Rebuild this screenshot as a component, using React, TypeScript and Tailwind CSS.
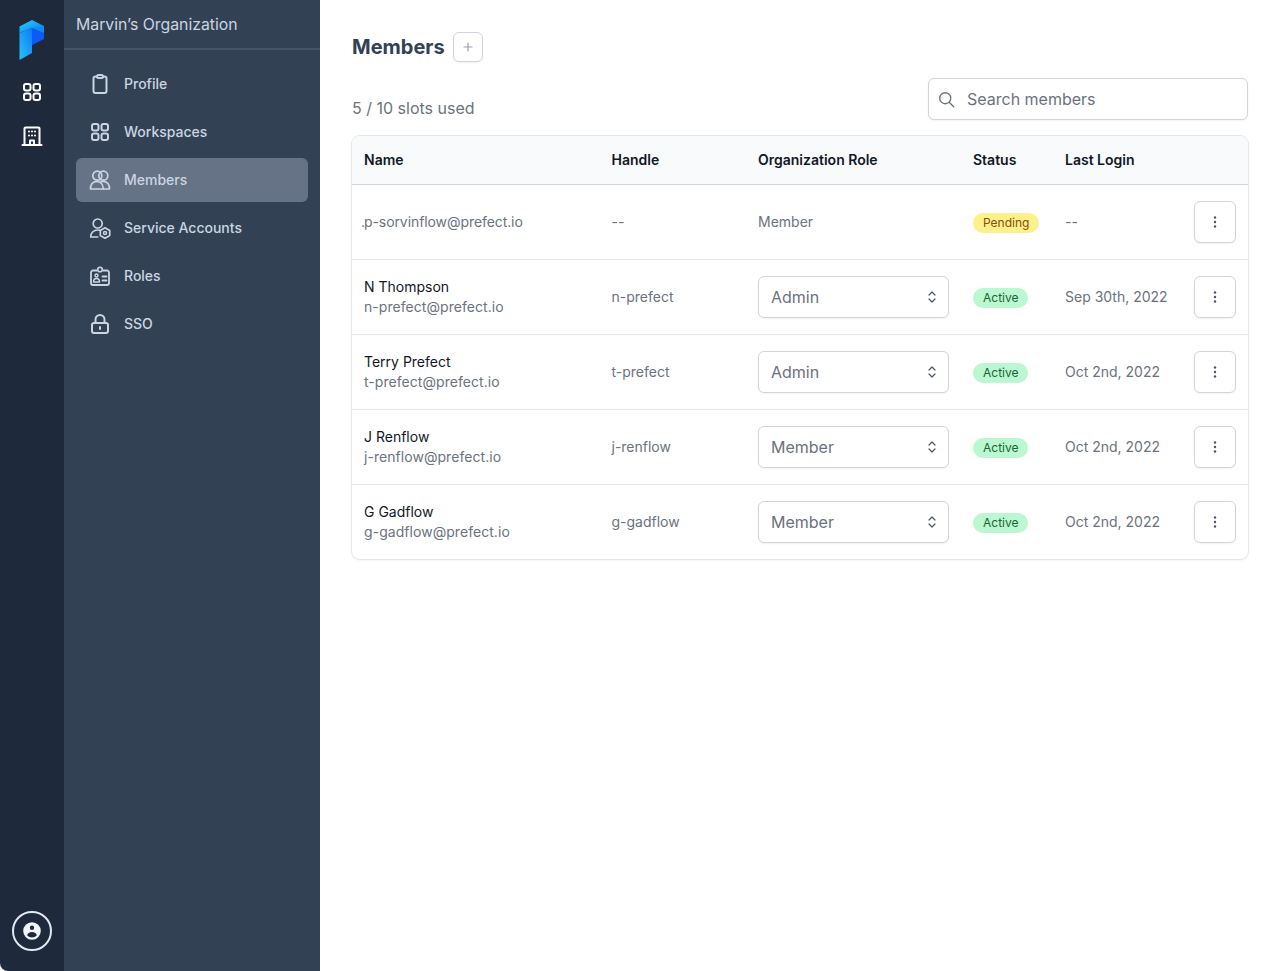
import React from "react";

const Sv = ({ children, className = "w-6 h-6" }: { children: React.ReactNode; className?: string }) => (
  <svg viewBox="0 0 24 24" fill="none" stroke="currentColor" strokeWidth="2" strokeLinecap="round" strokeLinejoin="round" className={className}>
    {children}
  </svg>
);

const Grid4 = ({ className }: { className?: string }) => (
  <Sv className={className}>
    <rect x="4" y="4" width="6.500" height="6.500" rx="2" />
    <rect x="13.500" y="4" width="6.500" height="6.500" rx="2" />
    <rect x="4" y="13.500" width="6.500" height="6.500" rx="2" />
    <rect x="13.500" y="13.500" width="6.500" height="6.500" rx="2" />
  </Sv>
);

const ProfileIcon = () => (
  <Sv>
    <path d="M9 4.500H7.500a2 2 0 0 0-2 2V19a2 2 0 0 0 2 2h9a2 2 0 0 0 2-2V6.500a2 2 0 0 0-2-2H15" />
    <path d="M9 4.500C9 3.700 9.700 3 10.500 3h3c.8 0 1.500.7 1.500 1.500S14.300 6 13.500 6h-3C9.700 6 9 5.300 9 4.500z" />
  </Sv>
);

const MembersIcon = () => (
  <Sv>
    <circle cx="9.300" cy="7.700" r="4.500" strokeWidth="1.700" />
    <circle cx="15.300" cy="7.700" r="4.500" strokeWidth="1.700" />
    <path d="M2.500 21c-.3-4.500 2.500-7.500 6-7.500s6.800 2.500 6.800 7.500z" strokeWidth="1.700" />
    <path d="M13 13.700c.6-.1 1.500-.2 2.500-.2 3.500 0 6.300 3 6 7.500h-6.200" strokeWidth="1.700" />
  </Sv>
);

const ServiceIcon = () => (
  <Sv>
    <circle cx="9.700" cy="7.500" r="4.500" strokeWidth="1.700" />
    <path d="M2.700 21c-.3-4 3-7 7-7 .8 0 1.500.1 2.100.3M2.700 21h7" strokeWidth="1.700" />
    <path d="M17 11.800l4.700 2.600v5.200L17 22.200l-4.700-2.600v-5.200z" strokeWidth="1.700" />
    <circle cx="17" cy="17" r="1.500" strokeWidth="1.500" />
  </Sv>
);

const RolesIcon = () => (
  <Sv>
    <path d="M9 6.500H5a2 2 0 0 0-2 2V19a2 2 0 0 0 2 2h14a2 2 0 0 0 2-2V8.500a2 2 0 0 0-2-2h-4" strokeWidth="1.800" />
    <circle cx="12" cy="5.500" r="2.300" strokeWidth="1.600" />
    <circle cx="8.500" cy="11.500" r="1.500" strokeWidth="1.500" />
    <path d="M5.500 18c0-2 1.300-3.500 3-3.500s3 1.500 3 3.500z" strokeWidth="1.500" />
    <path d="M14.500 12.500H18.500M14.500 16.500H18.500" strokeWidth="1.800" />
  </Sv>
);

const LockIcon = () => (
  <Sv>
    <rect x="4" y="11" width="16" height="10" rx="2" />
    <path d="M7.500 11V7.500a4.500 4.500 0 0 1 9 0V11" />
    <path d="M12 15v2" />
  </Sv>
);

const BuildingIcon = () => (
  <Sv className="w-6 h-6">
    <path d="M2.500 21h19" />
    <path d="M4.500 21V4.500a1 1 0 0 1 1-1h13a1 1 0 0 1 1 1V21" />
    <path d="M10 21v-4.500h4V21" />
    <path d="M9 7.500h.01M12 7.500h.01M15 7.500h.01M9 11.500h.01M12 11.500h.01M15 11.500h.01" />
  </Sv>
);

const Logo = () => (
  <svg viewBox="0 0 26 40" className="w-[26px] h-10">
    <defs>
      <linearGradient id="lg1" x1="0" y1="0" x2="1" y2="1">
        <stop offset="0" stopColor="#2dd4fd" />
        <stop offset="1" stopColor="#0b6ff0" />
      </linearGradient>
      <linearGradient id="lg2" x1="1" y1="0" x2="0" y2="1">
        <stop offset="0" stopColor="#0c7cf5" />
        <stop offset="1" stopColor="#2ac0fb" />
      </linearGradient>
    </defs>
    <polygon points="0.500,6.500 13,0 25,6 25,13 13,8 0.500,13" fill="url(#lg1)" />
    <polygon points="0.500,13 13,8 13,33 0.500,40" fill="url(#lg2)" />
    <polygon points="13,8 25,13 25,19 13,25" fill="#0a5cfa" />
    <polygon points="13,8 25,13 25,6.500" fill="#0a8cf5" />
  </svg>
);

const Chevrons = () => (
  <svg viewBox="0 0 10 14" className="w-2.5 h-3.5" fill="none" stroke="#4b5563" strokeWidth="1.200" strokeLinecap="round" strokeLinejoin="round">
    <path d="M2 5l3-3 3 3M2 9l3 3 3-3" />
  </svg>
);

const Kebab = () => (
  <button className="w-[42px] h-[42px] flex items-center justify-center bg-white rounded-md border border-[#d1d5db] shadow-[0_1px_2px_rgba(0,0,0,0.05)]">
    <svg viewBox="0 0 4 14" className="w-1 h-3.5" fill="#4b5563">
      <circle cx="2" cy="2.500" r="1.200" />
      <circle cx="2" cy="7" r="1.200" />
      <circle cx="2" cy="11.500" r="1.200" />
    </svg>
  </button>
);

const nav: { label: string; icon: React.ReactNode; active?: boolean }[] = [
  { label: "Profile", icon: <ProfileIcon /> },
  { label: "Workspaces", icon: <Grid4 className="w-6 h-6" /> },
  { label: "Members", icon: <MembersIcon />, active: true },
  { label: "Service Accounts", icon: <ServiceIcon /> },
  { label: "Roles", icon: <RolesIcon /> },
  { label: "SSO", icon: <LockIcon /> },
];

const rows = [
  { name: "N Thompson", email: "n-prefect@prefect.io", handle: "n-prefect", role: "Admin", login: "Sep 30th, 2022" },
  { name: "Terry Prefect", email: "t-prefect@prefect.io", handle: "t-prefect", role: "Admin", login: "Oct 2nd, 2022" },
  { name: "J Renflow", email: "j-renflow@prefect.io", handle: "j-renflow", role: "Member", login: "Oct 2nd, 2022" },
  { name: "G Gadflow", email: "g-gadflow@prefect.io", handle: "g-gadflow", role: "Member", login: "Oct 2nd, 2022" },
];

const Select = ({ value }: { value: string }) => (
  <div className="w-[191px] h-[42px] flex items-center justify-between pl-3 pr-[11px] bg-white rounded-md border border-[#d1d5db] shadow-[0_1px_2px_rgba(0,0,0,0.05)] text-base text-[#6b7280]">
    <span>{value}</span>
    <Chevrons />
  </div>
);

const Badge = ({ tone, children }: { tone: "green" | "yellow"; children: React.ReactNode }) => (
  <span className={`inline-flex items-center h-5 px-2.5 rounded-full text-xs leading-4 ${tone === "green" ? "bg-[#bbf7d0] text-[#166534]" : "bg-[#fef08a] text-[#854d0e]"}`}>
    {children}
  </span>
);

export default function App() {
  return (
    <div className="flex h-[971px] bg-white overflow-hidden font-['Inter',sans-serif]">
      <aside className="w-16 shrink-0 bg-[#1e293b] rounded-bl-lg flex flex-col items-center pt-5 pb-5 text-white">
        <Logo />
        <div className="mt-5"><Grid4 className="w-6 h-6" /></div>
        <div className="mt-5"><BuildingIcon /></div>
        <div className="mt-auto w-10 h-10 rounded-full border-2 border-[#e2e8f0] flex items-center justify-center">
          <svg viewBox="0 0 20 20" className="w-[22px] h-[22px]" fill="#f1f5f9">
            <path fillRule="evenodd" clipRule="evenodd" d="M18 10a8 8 0 1 1-16 0 8 8 0 0 1 16 0zm-6-3a2 2 0 1 1-4 0 2 2 0 0 1 4 0zm-2 4a5 5 0 0 0-4.500 2.800 6 6 0 0 0 9 0A5 5 0 0 0 10 11z" />
          </svg>
        </div>
      </aside>

      <nav className="w-64 shrink-0 bg-[#334155] flex flex-col">
        <div className="h-[50px] px-3 pt-[2px] flex items-center border-b-2 border-[#475569] text-[15.800px] text-[#cbd5e1]">
          Marvin&rsquo;s Organization
        </div>
        <div className="px-3 pt-3 flex flex-col gap-1">
          {nav.map((n) => (
            <div key={n.label} className={`h-11 px-3 flex items-center gap-3 rounded-md text-sm font-medium text-[#cbd5e1] ${n.active ? "bg-[#667285]" : ""}`}>
              {n.icon}
              <span>{n.label}</span>
            </div>
          ))}
        </div>
      </nav>

      <main className="flex-1 pl-8 pr-8 pt-8">
        <div className="flex items-center gap-2 h-[30px]">
          <h1 className="text-xl leading-[30px] font-bold text-[#334155]">Members</h1>
          <button className="w-[30px] h-[30px] flex items-center justify-center bg-white rounded-md border border-[#d1d5db] shadow-[0_1px_2px_rgba(0,0,0,0.05)]">
            <svg viewBox="0 0 10 10" className="w-2.5 h-2.5" fill="none" stroke="#9ca3af" strokeWidth="1.200" strokeLinecap="round">
              <path d="M5 1v8M1 5h8" />
            </svg>
          </button>
        </div>

        <div className="mt-4 flex items-end justify-between h-[42px]">
          <span className="text-base leading-6 text-[#6b7280]">5 / 10 slots used</span>
          <div className="w-80 h-[42px] flex items-center gap-3 pl-[9px] bg-white rounded-md border border-[#d1d5db] shadow-[0_1px_2px_rgba(0,0,0,0.05)] text-base text-[#6b7280]">
            <svg viewBox="0 0 20 20" className="w-[17px] h-[17px] shrink-0" fill="none" stroke="#6b7280" strokeWidth="1.600" strokeLinecap="round">
              <circle cx="8.500" cy="8.500" r="6.500" />
              <path d="M13.500 13.500L18.500 18.500" />
            </svg>
            <span>Search members</span>
          </div>
        </div>

        <div className="mt-4 rounded-lg shadow-[0_0_0_1px_#e5e7eb,0_1px_3px_rgba(0,0,0,0.08)] overflow-hidden">
          <table className="w-full table-fixed text-sm border-collapse">
            <colgroup>
              <col className="w-[247.500px]" />
              <col className="w-[146.500px]" />
              <col className="w-[215px]" />
              <col className="w-[92px]" />
              <col />
              <col className="w-[66px]" />
            </colgroup>
            <thead>
              <tr className="h-12 bg-[#f9fafb] border-b border-[#d1d5db] text-left text-[#111827]">
                <th className="px-3 font-semibold">Name</th>
                <th className="px-3 font-semibold">Handle</th>
                <th className="px-3 font-semibold">Organization Role</th>
                <th className="px-3 font-semibold">Status</th>
                <th className="px-3 font-semibold">Last Login</th>
                <th />
              </tr>
            </thead>
            <tbody className="text-[#6b7280]">
              <tr className="h-[75px] border-b border-[#e5e7eb]">
                <td className="px-3">
                  <span className="inline-block -ml-[3px] tracking-[-0.08px]">
                    <span className="-mr-px">.</span>p-sorvinflow@prefect.io
                  </span>
                </td>
                <td className="px-3">--</td>
                <td className="px-3">Member</td>
                <td className="px-3 pt-[2px]"><Badge tone="yellow">Pending</Badge></td>
                <td className="px-3">--</td>
                <td className="px-3"><Kebab /></td>
              </tr>
              {rows.map((r, i) => (
                <tr key={r.email} className={`h-[75px] ${i < rows.length - 1 ? "border-b border-[#e5e7eb]" : ""}`}>
                  <td className="px-3">
                    <div className="text-[#111827] leading-5">{r.name}</div>
                    <div className="leading-5 tracking-[0.05px]">{r.email}</div>
                  </td>
                  <td className="px-3">{r.handle}</td>
                  <td className="px-3"><Select value={r.role} /></td>
                  <td className="px-3 pt-[2px]"><Badge tone="green">Active</Badge></td>
                  <td className="px-3">{r.login}</td>
                  <td className="px-3"><Kebab /></td>
                </tr>
              ))}
            </tbody>
          </table>
        </div>
      </main>
    </div>
  );
}
